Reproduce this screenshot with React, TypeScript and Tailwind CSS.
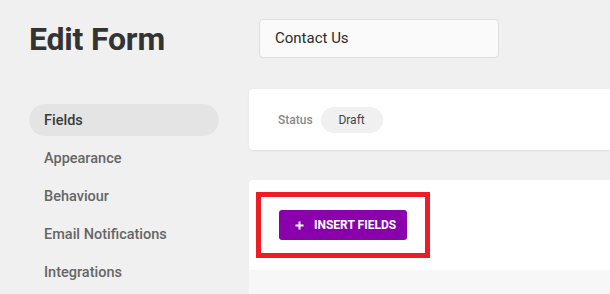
import React from "react";

const navItems = ["Fields", "Appearance", "Behaviour", "Email Notifications", "Integrations"];

const App: React.FC = () => {
  return (
    <div className="h-screen w-full overflow-hidden bg-[#f0f0f0] font-['Roboto',sans-serif]">
      {/* header */}
      <div className="flex items-center pl-[29px] pt-[19px]">
        <h1 className="w-[230px] text-[32px] font-bold leading-none text-[#333] tracking-[-0.2px]">Edit Form</h1>
        <div className="flex h-[39px] w-[240px] items-center rounded-[4px] border border-[#dedede] bg-[#fafafa] px-[15px] text-[15px] text-[#2b2b2b]">
          Contact Us
        </div>
      </div>

      <div className="mt-[31px] flex pl-[29px]">
        {/* sidebar */}
        <nav className="mt-[15px] flex w-[190px] flex-col gap-[6px]">
          {navItems.map((item, i) => (
            <div
              key={item}
              className={
                i === 0
                  ? "flex h-[32px] items-center rounded-full bg-[#e4e4e4] px-[15px] pt-[2px] text-[14.5px] font-medium text-[#3a3a3a]"
                  : "flex h-[32px] items-center px-[15px] pt-[2px] text-[14.5px] font-medium text-[#666]"
              }
            >
              {item}
            </div>
          ))}
        </nav>

        {/* main */}
        <div className="ml-[30px] flex flex-1 flex-col">
          <div className="flex h-[61px] items-center gap-[8px] rounded-l-[4px] bg-white pl-[29px] shadow-[0_1px_2px_rgba(0,0,0,0.08)]">
            <span className="text-[12px] font-medium text-[#888]">Status</span>
            <span className="flex h-[26px] w-[62px] items-center justify-center rounded-full bg-[#f0f0f0] text-[12px] text-[#444]">
              Draft
            </span>
          </div>

          <div className="mt-[30px] rounded-tl-[4px] bg-white">
            <div className="pb-[12px] pl-[7px] pt-[12px]">
              <div className="inline-flex border-[5px] border-[#ee1c25] px-[18px] py-[13px]">
                <button className="flex h-[30px] w-[128px] items-center gap-[10px] rounded-[3px] bg-[#8b00ad] pl-[16px] text-[12px] font-bold uppercase text-white">
                  <svg width="9" height="9" viewBox="0 0 9 9" fill="none">
                    <path d="M4.5 0.5v8M0.5 4.5h8" stroke="white" strokeWidth="2" />
                  </svg>
                  Insert Fields
                </button>
              </div>
            </div>
            <div className="h-[40px] bg-[#f7f7f7]" />
          </div>
        </div>
      </div>
    </div>
  );
};

export default App;
